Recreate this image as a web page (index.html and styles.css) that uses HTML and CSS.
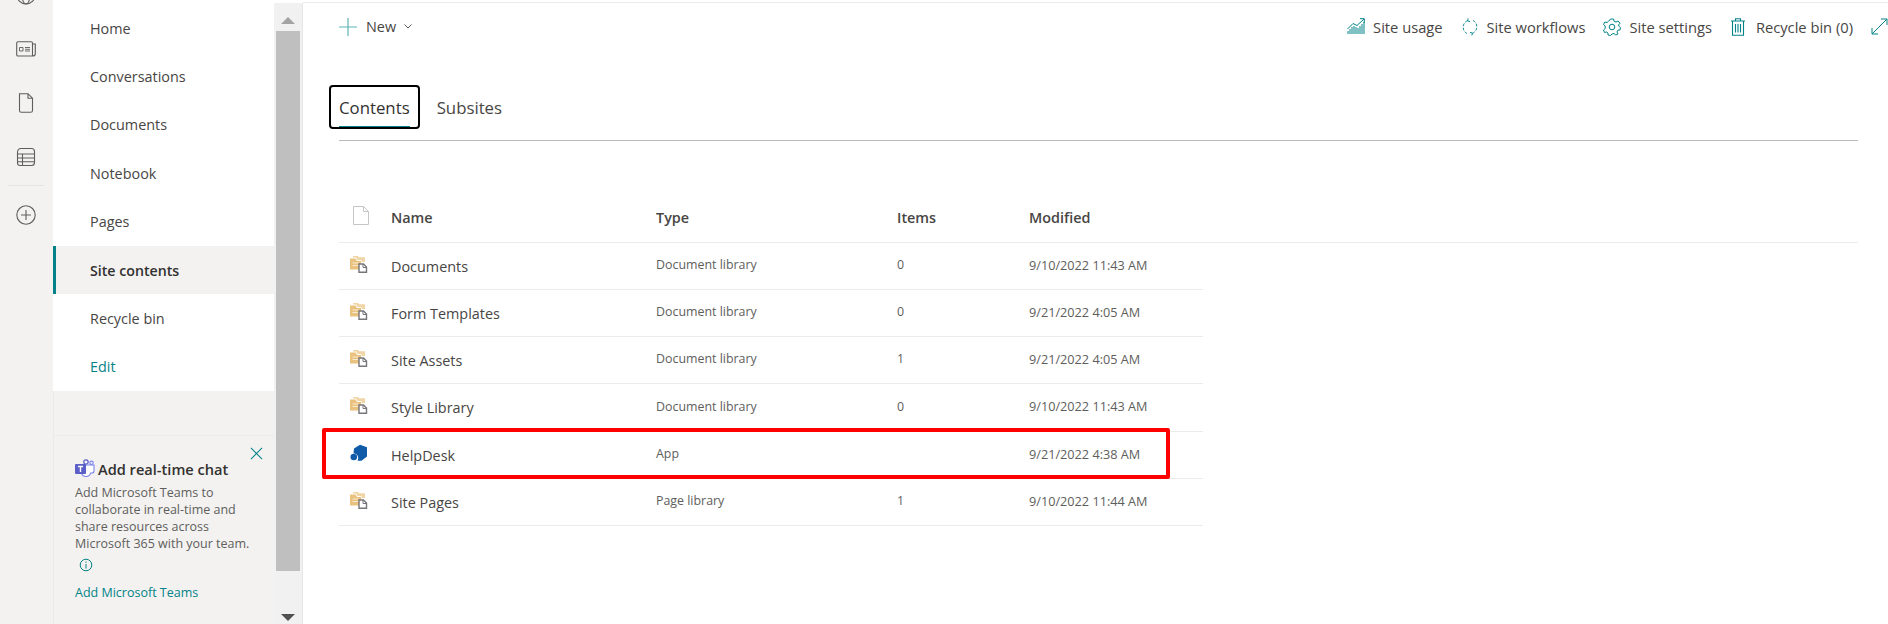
FILE: index.html
```html
<!DOCTYPE html>
<html lang="en">
<head>
<meta charset="utf-8">
<title>Site contents</title>
<link rel="stylesheet" href="styles.css">
</head>
<body>
<svg class="defs" width="0" height="0" aria-hidden="true">
  <symbol id="lib" viewBox="0 0 18 18">
    <path d="M0 3.500V14.500H11V6H7L5.500 3.500Z" fill="#eac27f"/>
    <path d="M3 2.500V1H8L9 2.200H15V7H11.500V5H7.500L6 2.500Z" fill="#f0d5a5"/>
    <path d="M2.500 7.500H8.500V8.500H2.500ZM2.500 10H8V11H2.500Z" fill="#f8e9cf"/>
    <path d="M9 9H13.500L16.500 12V17.200H9Z" fill="#fff" stroke="#77757a" stroke-width="1.400"/>
    <path d="M13 9V12.500H16.500" fill="none" stroke="#77757a" stroke-width="1"/>
  </symbol>
</svg>
<div class="page">
  <aside class="rail">
    <svg class="rail-ico" viewBox="0 0 20 20"><circle cx="10" cy="10" r="9"/><ellipse cx="10" cy="10" rx="4" ry="9"/><path d="M1 7H19M1 13H19"/></svg>
    <svg class="rail-ico" viewBox="0 0 20 20"><path d="M.7 4Q.7 2.700 2 2.700H15Q16.500 2.700 16.500 4V17H2Q.7 17 .7 15.700ZM16.500 5H19.300V15Q19.300 17 16.500 17"/><path d="M3.500 8.500H7V12H3.500ZM9 8.500H14M9 10.300H14M9 12H14" stroke-width=".9"/></svg>
    <svg class="rail-ico" viewBox="0 0 20 20"><path d="M3.500 .7H12L16.500 5.200V17.500Q16.500 19.300 14.700 19.300H5.300Q3.500 19.300 3.500 17.500ZM12 .7V5.200H16.500"/></svg>
    <svg class="rail-ico" viewBox="0 0 20 20"><path d="M1.500 5.500Q1.500 1.500 5 1.500H15.500Q18.500 1.500 18.500 4.500V15.500Q18.500 18.500 15.500 18.500H4Q1.500 18.500 1.500 16ZM1.500 7H18.500M1.500 11H18.500M1.500 14.800H18.500M6.500 7V18.500"/></svg>
    <div class="rail-sep"></div>
    <svg class="rail-ico" viewBox="0 0 20 20"><circle cx="10" cy="10" r="9.200"/><path d="M10 5V15M5 10H15"/></svg>
  </aside>

  <div class="nav-col">
    <nav class="nav">
      <a class="nav-item">Home</a>
      <a class="nav-item">Conversations</a>
      <a class="nav-item">Documents</a>
      <a class="nav-item">Notebook</a>
      <a class="nav-item">Pages</a>
      <a class="nav-item active">Site contents</a>
      <a class="nav-item">Recycle bin</a>
      <a class="nav-item edit">Edit</a>
    </nav>
    <section class="chat">
      <svg class="chat-close" viewBox="0 0 14 14"><path d="M1 1L13 13M13 1L1 13"/></svg>
      <div class="chat-title">
        <svg class="teams" viewBox="0 0 20 18">
          <circle cx="11" cy="3" r="2.200" fill="none" stroke="#5b5fc7" stroke-width="1.200"/>
          <circle cx="16.500" cy="3.800" r="1.700" fill="none" stroke="#7b83eb" stroke-width="1.100"/>
          <path d="M6 6H19V12Q19 14 17 14H15.500Q15 17.500 11 17.500Q7 17.500 6 13Z" fill="#fff" stroke="#7b83eb" stroke-width="1.100"/>
          <rect x="0" y="5" width="11" height="10" rx="1" fill="#5b5fc7"/>
          <path d="M3 7.500H8M5.500 7.500V13" stroke="#fff" stroke-width="1.400" fill="none"/>
        </svg>
        <span>Add real-time chat</span>
      </div>
      <p class="chat-text">Add Microsoft Teams to collaborate in real-time and share resources across Microsoft 365 with your team.</p>
      <svg class="chat-info" viewBox="0 0 14 14"><circle cx="7" cy="7" r="5.800"/><path d="M7 6V10.500M7 3.500V4.800"/></svg>
      <a class="chat-link">Add Microsoft Teams</a>
    </section>
  </div>

  <div class="scrollbar">
    <div class="arrow-btn"><span class="arrow up"></span></div>
    <div class="thumb"></div>
    <div class="arrow-btn bottom"><span class="arrow down"></span></div>
  </div>

  <main class="main">
    <header class="cmdbar">
      <div class="cmd new">
        <svg class="ico-plus" viewBox="0 0 18 18"><path d="M9 0V18M0 9H18"/></svg>
        <span>New</span>
        <svg class="ico-chev" viewBox="0 0 8 5"><path d="M.5 .5L4 4L7.500 .5"/></svg>
      </div>
      <div class="cmd-right">
        <div class="cmd">
          <svg class="ico ico-usage" viewBox="0 0 18 17"><path d="M1 16V13M3 16V11M5 16V9M7 16V8M9 16V9M11 16V10M13 16V8M15 16V6M17 16V4"/><path d="M.5 11L6 5.500L10 7.500L17 1M13 .7H17.300V5"/></svg>
          <span>Site usage</span>
        </div>
        <div class="cmd">
          <svg class="ico" viewBox="0 0 18 19"><path class="dash" d="M6.500 2.800A7.500 7.500 0 0 0 6 16.500M11.500 16.200A7.500 7.500 0 0 0 12 2.500"/><path d="M7 .5L6.500 3.200L9 3.800M11 18.500L11.500 15.800L9 15.300"/></svg>
          <span>Site workflows</span>
        </div>
        <div class="cmd">
          <svg class="ico" viewBox="0 0 18 18"><circle cx="9" cy="9" r="2.800"/><path d="M7.500 1H10.500L11 3.200L13 4L15 3L17 5.200L15.500 7L16.200 8.500L17.500 9.500L17 12L14.800 12.200L14 14L15 16L12.800 17L11 15.500L9 16L7.500 17.500L5 17L5 15L3.500 14L1.500 14.500L.5 12L2.200 10.500V8L.5 6.500L1.800 4L4 4.500L5.500 3.300Z"/></svg>
          <span>Site settings</span>
        </div>
        <div class="cmd">
          <svg class="ico ico-trash" viewBox="0 0 16 18"><path d="M1 3H15M5.500 3V.7H10.500V3M2.500 3V17.300H13.500V3M5.500 6V14.500M8 6V14.500M10.500 6V14.500"/></svg>
          <span>Recycle bin (0)</span>
        </div>
        <svg class="ico ico-expand" viewBox="0 0 17 17"><path d="M1 16L16 1M10 1H16V7M1 10V16H7"/></svg>
      </div>
    </header>

    <div class="tabs">
      <div class="tab active">Contents</div>
      <div class="tab">Subsites</div>
    </div>

    <div class="list">
      <div class="row head">
        <div class="c-ico"><svg class="ico-file" viewBox="0 0 16 19"><path d="M.5 .5H10.500L15.500 5.500V18.500H.5ZM10.500 .5V5.500H15.500"/></svg></div>
        <div class="c-name">Name</div><div class="c-type">Type</div><div class="c-items">Items</div><div class="c-mod">Modified</div>
      </div>
      <div class="row"><div class="c-ico"><svg class="ico-lib"><use href="#lib"/></svg></div><div class="c-name">Documents</div><div class="c-type">Document library</div><div class="c-items">0</div><div class="c-mod">9/10/2022 11:43 AM</div></div>
      <div class="row"><div class="c-ico"><svg class="ico-lib"><use href="#lib"/></svg></div><div class="c-name">Form Templates</div><div class="c-type">Document library</div><div class="c-items">0</div><div class="c-mod">9/21/2022 4:05 AM</div></div>
      <div class="row"><div class="c-ico"><svg class="ico-lib"><use href="#lib"/></svg></div><div class="c-name">Site Assets</div><div class="c-type">Document library</div><div class="c-items">1</div><div class="c-mod">9/21/2022 4:05 AM</div></div>
      <div class="row tall"><div class="c-ico"><svg class="ico-lib"><use href="#lib"/></svg></div><div class="c-name">Style Library</div><div class="c-type">Document library</div><div class="c-items">0</div><div class="c-mod">9/10/2022 11:43 AM</div></div>
      <div class="row"><div class="c-ico"><svg class="ico-lib" viewBox="0 0 18 18"><path d="M4 4.500L10 .7L17 3.200V12.500L11.500 16.800H7.500A5 5 0 0 0 3.500 9.200Z" fill="#0f5ba8"/><circle cx="3.800" cy="13" r="3.300" fill="#0f5ba8"/></svg></div><div class="c-name">HelpDesk</div><div class="c-type">App</div><div class="c-items"></div><div class="c-mod">9/21/2022 4:38 AM</div><div class="redbox"></div></div>
      <div class="row"><div class="c-ico"><svg class="ico-lib"><use href="#lib"/></svg></div><div class="c-name">Site Pages</div><div class="c-type">Page library</div><div class="c-items">1</div><div class="c-mod">9/10/2022 11:44 AM</div></div>
    </div>
  </main>
</div>
</body>
</html>
```

FILE: styles.css
```css
* { box-sizing: border-box; }
html, body { margin: 0; height: 624px; overflow: hidden; background: #fff; }
body { font-family: "Open Sans", "Liberation Sans", sans-serif; font-size: 14.4px; color: #323130; }
.defs { position: absolute; }
.page { display: flex; height: 624px; overflow: hidden; }

.rail { width: 53px; flex: none; background: #f3f2f1; display: flex; flex-direction: column; align-items: center; padding-right: 1px; overflow: hidden; gap: 34px; }
.rail-ico { width: 20px; height: 20px; flex: none; fill: none; stroke: #605e5c; stroke-width: 1.1; }
.rail-ico:first-child { margin-top: -15px; }
.rail-sep { width: 36px; height: 1px; flex: none; background: #e6e4e2; margin: -16px 0 -15px; }

.nav-col { width: 221px; flex: none; margin-top: 4px; display: flex; flex-direction: column; background: #f3f2f1; border-left: 1px solid #edebe9; }
.nav { background: #fff; margin-left: -1px; }
.nav-item { display: flex; align-items: center; height: 48.4px; padding-left: 34px; color: #484644; border-left: 3px solid transparent; }
.nav-item.active { background: #f3f2f1; border-left-color: #038387; font-weight: 600; font-size: 14.2px; color: #323130; }
.nav-item.edit { color: #038387; }

.chat { position: relative; margin-top: 44px; flex: 1; border-top: 1px solid #edebe9; padding: 23px 0 0 21px; }
.chat-close { position: absolute; top: 11px; right: 11px; width: 13px; height: 13px; fill: none; stroke: #038387; stroke-width: 1.1; }
.chat-title { display: flex; align-items: center; gap: 3px; font-size: 14.6px; font-weight: 600; color: #323130; height: 19px; }
.teams { width: 20px; height: 18px; flex: none; margin-top: -2px; }
.chat-text { margin: 6px 0 0; width: 180px; font-size: 12.5px; line-height: 17.1px; color: #605e5c; }
.chat-info { display: block; width: 14px; height: 14px; margin: 5px 0 0 4px; fill: none; stroke: #038387; stroke-width: 1; }
.chat-link { display: block; margin-top: 12px; font-size: 12.5px; line-height: 17px; color: #038387; }

.scrollbar { width: 29px; flex: none; margin-top: 3px; background: #f1f1f1; border-right: 1px solid #e6e6e6; padding: 0 2px; display: flex; flex-direction: column; }
.arrow-btn { height: 28px; flex: none; display: flex; justify-content: center; align-items: center; }
.arrow-btn.bottom { height: 53px; align-items: flex-end; padding-bottom: 3px; }
.thumb { height: 540px; flex: none; background: #bfbfbf; }
.arrow { width: 0; height: 0; border-left: 7px solid transparent; border-right: 7px solid transparent; }
.arrow.up { border-bottom: 7px solid #a3a3a3; margin-top: 7px; }
.arrow.down { border-top: 7px solid #505050; }

.main { flex: 1; min-width: 0; margin-top: 2px; border-top: 1px solid #edebe9; padding: 0 30px 0 36px; }
.cmdbar { display: flex; justify-content: space-between; align-items: center; height: 47px; margin-right: -30px; }
.cmd { display: flex; align-items: center; color: #484644; }
.cmd.new span { margin-left: 9px; }
.cmd-right .cmd { font-size: 14.7px; }
.ico-plus { width: 18px; height: 18px; fill: none; stroke: #5fb3b5; stroke-width: 1.2; }
.ico-chev { width: 8px; height: 5px; margin-left: 8px; fill: none; stroke: #605e5c; stroke-width: 1; }
.cmd-right { display: flex; align-items: center; gap: 18px; }
.ico { width: 18px; height: 18px; flex: none; margin-right: 8px; fill: none; stroke: #038387; stroke-width: 1; }
.ico .dash { stroke-dasharray: 3 1.6; }
.ico-usage { height: 17px; }
.ico-trash { width: 16px; margin-right: 10px; stroke-width: 1.1; }
.ico-expand { width: 17px; height: 17px; margin-right: 0; }

.tabs { display: flex; margin-top: 35px; height: 56px; border-bottom: 1px solid #bdbbb9; align-items: flex-start; }
.tab { font-size: 16.8px; line-height: 46px; height: 44px; margin-right: 27px; color: #484644; white-space: nowrap; position: relative; }
.tab.active { color: #323130; }
.tab.active::before { content: ""; position: absolute; left: -10px; right: -10px; top: 0; bottom: 0; border: 2px solid #000; border-radius: 4px; }
.tab.active::after { content: ""; position: absolute; left: 0; right: 0; bottom: 2px; height: 1px; background: #038387; }

.list { margin-top: 48px; }
.row { position: relative; display: flex; height: 47px; border-bottom: 1px solid #edebe9; width: 864px; align-items: center; }
.row.tall { height: 48px; }
.row.head { height: 54px; width: auto; }
.row.head > div { font-size: 14.4px; font-weight: 600; color: #484644; margin: 0; padding-top: 4px; }
.c-ico { width: 52px; flex: none; padding-left: 11px; display: flex; }
.c-name { width: 265px; flex: none; color: #484644; padding-top: 0; }
.c-type { width: 241px; flex: none; font-size: 12.4px; color: #605e5c; margin-top: -3px; }
.c-items { width: 132px; flex: none; font-size: 12.4px; color: #605e5c; margin-top: -3px; }
.c-mod { flex: none; font-size: 12.7px; color: #605e5c; margin-top: -3px; }
.row.head .c-ico { padding-left: 14px; padding-top: 0; }
.ico-file { width: 16px; height: 19px; fill: none; stroke: #c8c6c4; stroke-width: 1; }
.ico-lib { width: 18px; height: 18px; margin-top: -5px; }
.redbox { position: absolute; left: -17px; top: -4px; width: 848px; height: 51px; border: 4px solid #f00; border-radius: 2px; }
```
